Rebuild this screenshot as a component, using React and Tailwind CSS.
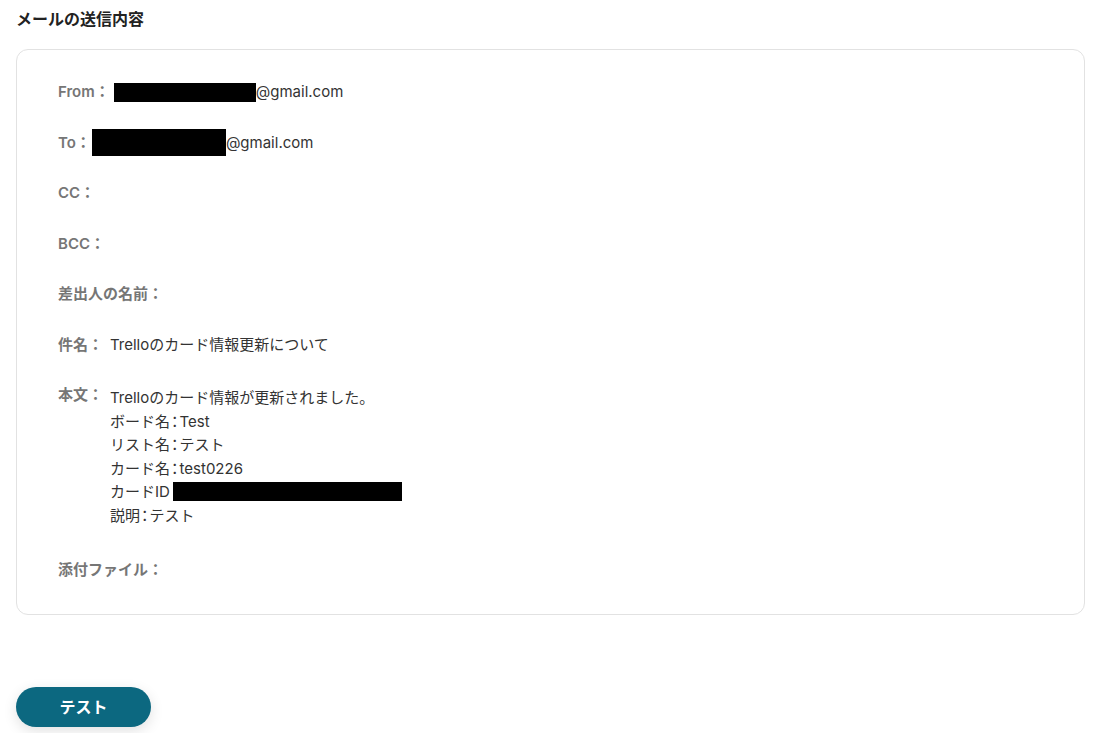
const font = { fontFamily: '"Inter", "Noto Sans CJK JP", sans-serif' }

function Row({ label, children, top }) {
  return (
    <div className={`flex ${top ? "items-start" : "items-center"} h-6 min-h-6`}>
      <span className="text-[15px] font-semibold text-[#767676] leading-6 whitespace-nowrap">{label}</span>
      {children}
    </div>
  )
}

function Redact({ w, h }) {
  return <span className="inline-block bg-black" style={{ width: w, height: h }} />
}

// narrow colon as in the body lines
function C() {
  return <span className="[font-feature-settings:'palt'] mx-[1px]">：</span>
}

export default function App() {
  return (
    <div className="min-h-[733px] bg-white pt-[8px] text-[#333]" style={font}>
      <h2 className="ml-4 text-[16px] font-semibold text-[#222] leading-[22px]">メールの送信内容</h2>

      <div className="ml-4 mr-3 mt-[19px] rounded-xl border border-[#e2e2e2] pl-[41px] pr-6 pt-[30px] pb-[32px]">
        <div className="flex flex-col gap-[26.5px]">
          <Row label="From：">
            <span className="ml-[4px] flex items-center text-[15px] leading-6">
              <Redact w={142} h={19} />
              @gmail.com
            </span>
          </Row>
          <Row label="To：">
            <span className="ml-[1px] flex items-center text-[15px] leading-6">
              <Redact w={134} h={27} />
              @gmail.com
            </span>
          </Row>
          <Row label="CC：" />
          <Row label="BCC：" />
          <Row label="差出人の名前：" />
          <Row label="件名：">
            <span className="ml-[7px] text-[15px] leading-6">Trelloのカード情報更新について</span>
          </Row>
          <div className="flex items-start">
            <span className="text-[15px] font-semibold text-[#767676] leading-6 whitespace-nowrap">本文：</span>
            <div className="ml-[7px] mt-[3px] text-[15px] leading-[23.5px]">
              <p>Trelloのカード情報が更新されました。</p>
              <p>ボード名<C />Test</p>
              <p>リスト名<C />テスト</p>
              <p>カード名<C />test0226</p>
              <p className="flex items-center">
                カードID<span className="w-[3px]" />
                <Redact w={229} h={19} />
              </p>
              <p>説明<C />テスト</p>
            </div>
          </div>
          <div className="mt-[4px]">
            <Row label="添付ファイル：" />
          </div>
        </div>
      </div>

      <div className="ml-4 mt-[72px]">
        <button className="w-[135px] h-10 rounded-full bg-[#0c6880] text-white text-[16px] font-bold shadow-[0_4px_14px_rgba(0,0,0,0.12)]">
          テスト
        </button>
      </div>
    </div>
  )
}
